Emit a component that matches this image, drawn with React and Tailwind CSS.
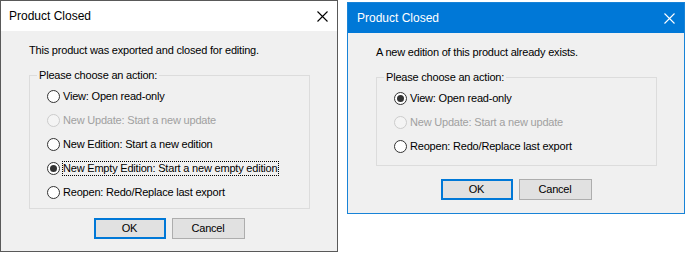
import React from "react"

function Radio({ checked, disabled }) {
    if (disabled) {
        return <span className="w-[13px] h-[13px] rounded-full border border-[#cccccc] bg-[#f4f4f4] shrink-0" />
    }
    return (
        <span className="w-[13px] h-[13px] rounded-full border border-[#333333] bg-white shrink-0 flex items-center justify-center">
            {checked && <span className="w-[7px] h-[7px] rounded-full bg-[#333333]" />}
        </span>
    )
}

function Option({ label, checked, disabled, focused }) {
    return (
        <div className="h-[24px] flex items-center">
            <Radio checked={checked} disabled={disabled} />
            <span
                className={
                    focused
                        ? "ml-[2px] border border-dotted border-black leading-[13px] pr-[1px]"
                        : "ml-[2px] border border-transparent leading-[13px] pr-[1px]"
                }
                style={{ color: disabled ? "#a0a0a0" : "#000000" }}
            >
                {label}
            </span>
        </div>
    )
}

function CloseIcon({ color }) {
    return (
        <svg width="11" height="11" viewBox="0 0 11 11" className="block">
            <path d="M0.5 0.5 L10.5 10.5 M10.5 0.5 L0.5 10.5" stroke={color} strokeWidth="1.1" fill="none" />
        </svg>
    )
}

function Dialog({ active, message, options, groupPb, btnMt, bottomPb }) {
    return (
        <div
            className={
                active
                    ? "w-[338px] border border-[#1883d7] bg-[#f0f0f0] flex flex-col"
                    : "w-[338px] border border-[#595959] bg-[#f0f0f0] flex flex-col"
            }
        >
            {/* title bar */}
            <div
                className={
                    active
                        ? "h-[30px] bg-[#0078d7] text-white flex items-center justify-between pl-[9px] pr-[9px]"
                        : "h-[30px] bg-white text-black flex items-center justify-between pl-[8px] pr-[9px]"
                }
            >
                <span className="text-[12px] leading-[14px] font-['Liberation_Sans',sans-serif]">Product Closed</span>
                <CloseIcon color={active ? "#ffffff" : "#000000"} />
            </div>

            {/* body */}
            <div className="px-[28px] pt-[13px] font-['Liberation_Sans',sans-serif] text-[11px] tracking-[-0.2px] text-black" style={{ paddingBottom: bottomPb }}>
                <p className="leading-[13px]">{message}</p>

                <fieldset className="mt-[12px] w-[281px] border border-[#dcdcdc]">
                    <legend className="ml-[7px] px-[2px] leading-[13px]">Please choose an action:</legend>
                    <div className="pl-[17px] pt-[2px]" style={{ paddingBottom: groupPb }}>
                        {options.map((o) => (
                            <Option key={o.label} {...o} />
                        ))}
                    </div>
                </fieldset>

                <div className="flex justify-center gap-[6px]" style={{ marginTop: btnMt }}>
                    <button className="w-[72px] h-[21px] bg-[#e1e1e1] border-2 border-[#0078d7] text-[11px] leading-none text-black">
                        OK
                    </button>
                    <button className="w-[73px] h-[21px] bg-[#e1e1e1] border border-[#adadad] text-[11px] leading-none text-black">
                        Cancel
                    </button>
                </div>
            </div>
        </div>
    )
}

export default function App() {
    return (
        <div className="w-[687px] h-[259px] bg-white flex items-start gap-[9px]">
            <Dialog
                message="This product was exported and closed for editing."
                groupPb="4px"
                btnMt="9px"
                bottomPb="12px"
                options={[
                    { label: "View: Open read-only" },
                    { label: "New Update: Start a new update", disabled: true },
                    { label: "New Edition: Start a new edition" },
                    { label: "New Empty Edition: Start a new empty edition", checked: true, focused: true },
                    { label: "Reopen: Redo/Replace last export" },
                ]}
            />
            <div className="mt-[2px]">
                <Dialog
                    active
                    message="A new edition of this product already exists."
                    groupPb="7px"
                    btnMt="13px"
                    bottomPb="13px"
                    options={[
                        { label: "View: Open read-only", checked: true },
                        { label: "New Update: Start a new update", disabled: true },
                        { label: "Reopen: Redo/Replace last export" },
                    ]}
                />
            </div>
        </div>
    )
}
